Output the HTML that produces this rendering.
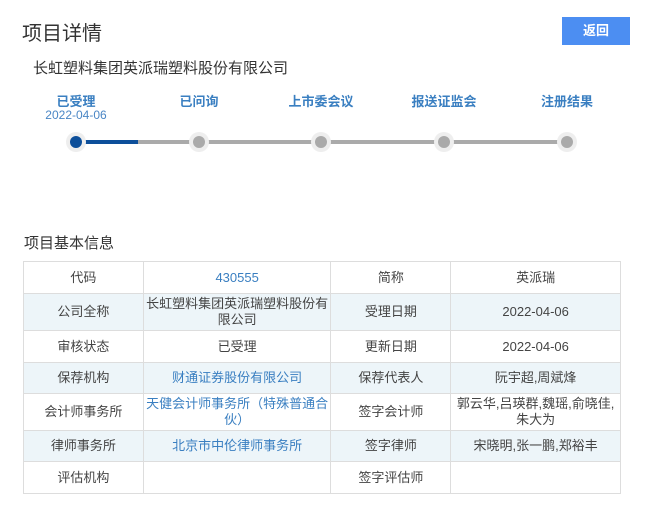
<!DOCTYPE html>
<html><head><meta charset="utf-8"><style>
*{margin:0;padding:0;box-sizing:border-box}
body{width:660px;height:511px;background:#fff;font-family:"Liberation Sans","Noto Sans CJK SC",sans-serif;position:relative;overflow:hidden;color:#333}
.a{position:absolute}
.t{left:22px;top:17px;font-size:20px;color:#333}
.btn{left:562px;top:17px;width:68px;height:28px;background:#4c8ef2;color:#fff;font-size:13px;font-weight:bold;text-align:center;line-height:28px}
.co{left:33px;top:57px;font-size:15px;color:#333}
.lb{top:91px;font-size:13px;font-weight:bold;color:#3a7fc1;width:100px;text-align:center}
.dt{top:108px;font-size:12px;color:#4a86c5;width:100px;text-align:center}
.line{top:140px;height:4px;background:#aaa}
.dot{width:20px;height:20px;border-radius:50%;background:#eee;top:132px}
.dot i{position:absolute;left:4px;top:4px;width:12px;height:12px;border-radius:50%;background:#aaa}
.h2{left:24px;top:232px;font-size:15px;color:#333}
table{position:absolute;left:23px;top:261px;width:598px;border-collapse:collapse;font-size:13px;color:#444}
td{border:1px solid #ddd;text-align:center;line-height:16px;padding:0 1px}
tr:nth-child(even){background:#edf5f9}
.b{color:#3a7fc1}
</style></head><body>
<div class="a t">项目详情</div>
<div class="a btn">返回</div>
<div class="a co">长虹塑料集团英派瑞塑料股份有限公司</div>
<div class="a lb" style="left:26px">已受理</div>
<div class="a dt" style="left:26px">2022-04-06</div>
<div class="a lb" style="left:149px">已问询</div>
<div class="a lb" style="left:271px">上市委会议</div>
<div class="a lb" style="left:394px">报送证监会</div>
<div class="a lb" style="left:517px">注册结果</div>
<div class="a line" style="left:76px;width:491px"></div>
<div class="a line" style="left:76px;width:62px;background:#0d4f9a"></div>
<div class="a dot" style="left:66px"><i style="background:#0d4f9a"></i></div>
<div class="a dot" style="left:189px"><i></i></div>
<div class="a dot" style="left:311px"><i></i></div>
<div class="a dot" style="left:434px"><i></i></div>
<div class="a dot" style="left:557px"><i></i></div>
<div class="a h2">项目基本信息</div>
<table>
<colgroup><col style="width:120px"><col style="width:188px"><col style="width:120px"><col style="width:170px"></colgroup>
<tr style="height:32px"><td>代码</td><td class="b">430555</td><td>简称</td><td>英派瑞</td></tr>
<tr style="height:37px"><td>公司全称</td><td>长虹塑料集团英派瑞塑料股份有限公司</td><td>受理日期</td><td>2022-04-06</td></tr>
<tr style="height:32px"><td>审核状态</td><td>已受理</td><td>更新日期</td><td>2022-04-06</td></tr>
<tr style="height:31px"><td>保荐机构</td><td class="b">财通证券股份有限公司</td><td>保荐代表人</td><td>阮宇超,周斌烽</td></tr>
<tr style="height:37px"><td>会计师事务所</td><td class="b">天健会计师事务所（特殊普通合伙）</td><td>签字会计师</td><td>郭云华,吕瑛群,魏瑶,俞晓佳,朱大为</td></tr>
<tr style="height:31px"><td>律师事务所</td><td class="b">北京市中伦律师事务所</td><td>签字律师</td><td>宋晓明,张一鹏,郑裕丰</td></tr>
<tr style="height:32px"><td>评估机构</td><td></td><td>签字评估师</td><td></td></tr>
</table>
</body></html>
